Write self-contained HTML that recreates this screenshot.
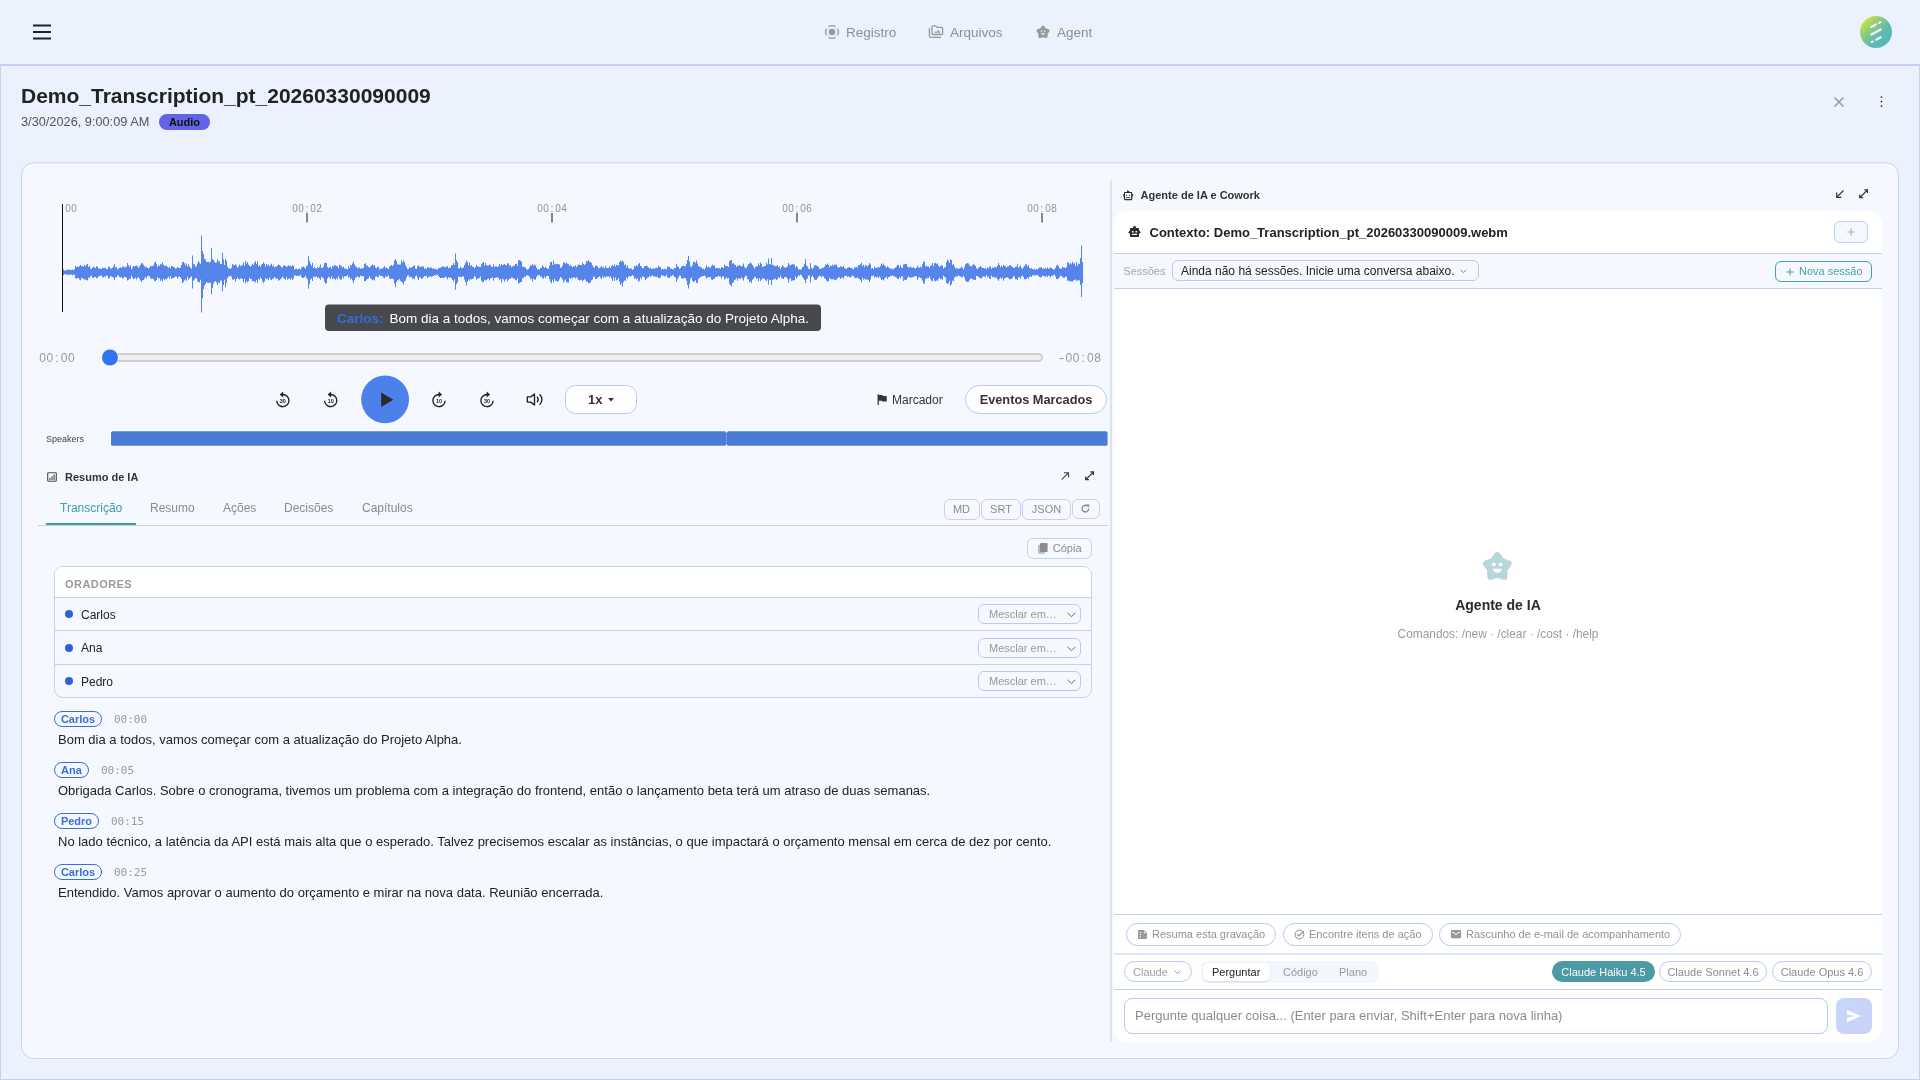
<!DOCTYPE html>
<html lang="pt">
<head>
<meta charset="utf-8">
<title>Demo_Transcription_pt_20260330090009</title>
<style>
*{box-sizing:border-box;margin:0;padding:0}
html,body{width:1920px;height:1080px;overflow:hidden}
body{background:#ebf1fd;font-family:"Liberation Sans",sans-serif;color:#222;position:relative;font-size:13px}
.abs{position:absolute}
.mono{font-family:"Liberation Mono",monospace}
.dmono{font-family:"DejaVu Sans Mono","Liberation Mono",monospace}
svg{display:block;overflow:visible}
.t{position:absolute;white-space:nowrap;line-height:1}
/* header */
#hdr{left:0;top:0;width:1920px;height:66px;border-bottom:2px solid #c3d1f1}
.nav{color:#8f8f8f;font-size:13.500px}
/* main frame */
#frame{left:0;top:65px;width:1920px;height:1015px;border:1px solid #c3d1f1;border-top:none;border-bottom-width:1px}
#card{left:21px;top:163px;width:1878px;height:896px;border:1px solid #c5d3f5;border-radius:13px;background:#f5f8ff}
.pill{position:absolute;border:1px solid #b9c9f3;background:#fff;border-radius:14px}
.btn{position:absolute;border:1px solid #c3d1f1;border-radius:6px;background:#f5f8ff;color:#8c8c8c;font-size:11px;text-align:center}
.hl{position:absolute;height:1px;background:#c3d1f1}
.fx span{display:inline-block;text-align:center}.fx10 span{width:6px}.fx12 span{width:7.2px}
</style>
</head>
<body>
<div id="root" style="position:absolute;left:0;top:0;width:1920px;height:1080px;will-change:transform">
<!-- HEADER -->
<div id="hdr" class="abs"></div>
<svg class="abs" style="left:33px;top:24px" width="18" height="16" viewBox="0 0 18 16"><path d="M0 1.500h18M0 8h18M0 14.500h18" stroke="#222" stroke-width="1.900" fill="none"/></svg>

<div class="t nav" style="left:846px;top:26px">Registro</div>
<div class="t nav" style="left:950px;top:26px">Arquivos</div>
<div class="t nav" style="left:1057px;top:26px">Agent</div>


<svg class="abs" style="left:824px;top:24px" width="16" height="16" viewBox="0 0 16 16"><path d="M4.66 2.66A6.3 6.3 0 0 1 11.34 2.66M13.34 4.66A6.3 6.3 0 0 1 13.34 11.34M11.34 13.34A6.3 6.3 0 0 1 4.66 13.34M2.66 11.34A6.3 6.3 0 0 1 2.66 4.66" fill="none" stroke="#999" stroke-width="1.3"/><circle cx="8" cy="8" r="3.3" fill="#999"/></svg>
<svg class="abs" style="left:928px;top:24px" width="16" height="15" viewBox="0 0 16 15"><g fill="none" stroke="#999" stroke-width="1.3"><path d="M1.4 4.2V12.300a1 1 0 0 0 1 1H13"/><path d="M5 1.800H7.600L9.200 3.400H13.600a1 1 0 0 1 1 1V9.500a1 1 0 0 1-1 1H5a1 1 0 0 1-1-1V2.800a1 1 0 0 1 1-1Z"/></g><path d="M6.200 8.700L7.800 7.200L8.600 8L10.400 6.100L12.400 8.700Z" fill="#999"/></svg>
<svg class="abs" style="left:1036px;top:24.800px" width="14" height="13.500" viewBox="0 0 33 32"><path d="M16.50 4.80L21.14 11.01L28.48 13.51L24.01 19.84L23.91 27.59L16.50 25.30L9.09 27.59L8.99 19.84L4.52 13.51L11.86 11.01Z" fill="#999" stroke="#999" stroke-width="7" stroke-linejoin="round"/><circle cx="12.800" cy="14.500" r="1.900" fill="#ebf1fd"/><circle cx="20.200" cy="14.500" r="1.900" fill="#ebf1fd"/><path d="M12 19.300h9a4.500 4 0 0 1-9 0z" fill="#ebf1fd"/></svg>

<!-- avatar -->
<div class="abs" style="left:1860px;top:16px;width:32px;height:32px;border-radius:50%;background:linear-gradient(135deg,#dbe830 10%,#8fcc7c 35%,#5fbab2 62%,#55b4c3 100%)"></div>
<svg class="abs" style="left:1860px;top:16px" width="32" height="32" viewBox="0 0 32 32"><g stroke="#eef3fb" stroke-width="2.200" stroke-linecap="round" fill="none" transform="translate(0.300 0.200)"><path d="M11 10.700L15.600 8.300M18.800 6.700L20.400 5.900"/><path d="M11 18.300L20.400 13.300"/><path d="M11.400 25.800L12.600 25.200M15.800 23.500L20.400 21"/></g></svg>

<!-- close + kebab -->
<svg class="abs" style="left:1834px;top:97px" width="10" height="10" viewBox="0 0 10 10"><path d="M0.500 0.500L9.500 9.500M9.500 0.500L0.500 9.500" stroke="#999" stroke-width="1.500"/></svg>
<svg class="abs" style="left:1879.800px;top:95.800px" width="3" height="12" viewBox="0 0 3 12"><circle cx="1.500" cy="1.100" r="0.900" fill="#333"/><circle cx="1.500" cy="5.600" r="0.900" fill="#333"/><circle cx="1.500" cy="10.200" r="0.900" fill="#333"/></svg>

<!-- FRAME -->
<div id="frame" class="abs"></div>
<div class="t" style="left:21px;top:85px;font-size:21px;font-weight:bold;color:#222">Demo_Transcription_pt_20260330090009</div>
<div class="t" style="left:21px;top:116px;font-size:12.750px;color:#555">3/30/2026, 9:00:09 AM</div>
<div class="abs" style="left:159px;top:114px;width:51.400px;height:16.300px;border-radius:8.200px;background:#6164e6"></div>
<div class="t" style="left:159.500px;top:117px;width:50px;text-align:center;font-size:11px;font-weight:bold;color:#111">Audio</div>

<svg class="abs" style="left:0;top:0" width="1920" height="1080" viewBox="0 0 1920 1080"><rect x="21.500" y="162.900" width="1877" height="895.600" rx="12" fill="#f5f8ff" stroke="#c5d3f5" stroke-width="1"/></svg>


<!-- ===== LEFT: PLAYER ===== -->
<svg class="abs" style="left:0;top:0" width="1120" height="340" viewBox="0 0 1120 340">
  
  <path d="M307 213v9.5M552 213v9.5M797 213v9.5M1042 213v9.5" stroke="#86868c" stroke-width="2"/>
  <path d="M62,272.3V270.4h1V269.5h1V270.4h1V270.4h1V270.2h1V269.7h1V269.6h1V269.7h1V269.9h1V270.1h1V269.4h1V270.2h1V269.3h1V266.0h1V266.9h1V266.7h1V266.9h1V265.9h1V265.1h1V265.9h1V266.2h1V266.6h1V265.1h1V266.3h1V264.8h1V263.9h1V267.1h1V265.7h1V268.7h1V268.8h1V267.5h1V266.7h1V267.6h1V268.3h1V266.3h1V266.6h1V268.5h1V268.5h1V268.8h1V269.0h1V267.8h1V268.0h1V268.1h1V267.8h1V269.2h1V269.0h1V266.6h1V266.9h1V268.4h1V268.4h1V267.8h1V266.5h1V264.3h1V267.6h1V267.1h1V269.4h1V268.5h1V267.9h1V267.3h1V268.1h1V266.8h1V266.2h1V267.8h1V266.8h1V266.7h1V263.1h1V265.2h1V266.8h1V265.3h1V269.2h1V267.8h1V266.1h1V266.3h1V265.9h1V265.4h1V266.3h1V268.0h1V266.4h1V265.0h1V263.2h1V263.3h1V264.8h1V265.9h1V267.4h1V266.4h1V268.0h1V268.3h1V267.6h1V266.0h1V266.3h1V266.0h1V265.6h1V262.8h1V261.6h1V264.3h1V266.9h1V265.3h1V266.1h1V264.0h1V264.5h1V262.2h1V264.8h1V265.7h1V265.9h1V265.4h1V267.1h1V268.0h1V266.6h1V268.2h1V265.9h1V265.9h1V266.9h1V267.6h1V268.6h1V268.2h1V266.7h1V267.7h1V268.0h1V267.8h1V264.9h1V262.1h1V261.9h1V263.2h1V265.2h1V263.6h1V266.5h1V264.2h1V266.5h1V267.6h1V268.7h1V255.4h1V263.9h1V264.5h1V266.4h1V266.3h1V263.6h1V261.1h1V262.8h1V263.8h1V235.6h1V251.1h1V254.1h1V258.7h1V259.5h1V261.9h1V261.7h1V261.7h1V262.4h1V261.7h1V247.8h1V259.0h1V260.2h1V261.4h1V263.0h1V262.4h1V259.5h1V261.2h1V261.5h1V263.9h1V264.0h1V253.1h1V259.4h1V265.0h1V258.7h1V260.8h1V266.6h1V268.4h1V268.3h1V269.1h1V267.7h1V263.9h1V265.2h1V265.2h1V264.3h1V265.4h1V267.8h1V266.6h1V264.7h1V266.2h1V265.6h1V265.1h1V262.6h1V265.7h1V261.1h1V263.5h1V261.9h1V264.8h1V265.7h1V266.6h1V265.8h1V263.8h1V265.0h1V262.7h1V260.9h1V263.9h1V261.3h1V266.3h1V265.0h1V266.9h1V264.8h1V264.0h1V262.3h1V263.8h1V266.6h1V264.0h1V265.6h1V264.4h1V266.5h1V264.9h1V263.7h1V266.6h1V265.1h1V267.2h1V266.8h1V266.5h1V265.4h1V264.6h1V264.9h1V266.0h1V267.2h1V267.4h1V265.8h1V265.2h1V266.1h1V266.7h1V266.3h1V265.3h1V266.0h1V265.4h1V266.8h1V265.1h1V266.0h1V269.4h1V268.9h1V268.5h1V269.5h1V268.9h1V268.6h1V269.8h1V267.4h1V266.9h1V266.5h1V267.4h1V268.5h1V266.2h1V265.2h1V256.2h1V260.7h1V263.8h1V265.8h1V262.8h1V268.0h1V266.9h1V268.2h1V268.5h1V267.3h1V268.0h1V266.7h1V264.5h1V267.9h1V267.9h1V266.2h1V263.1h1V262.7h1V262.9h1V267.0h1V268.2h1V267.1h1V266.9h1V268.4h1V265.9h1V266.4h1V265.1h1V265.6h1V266.1h1V266.2h1V268.1h1V264.7h1V265.2h1V266.2h1V267.4h1V266.5h1V268.5h1V268.6h1V268.9h1V269.5h1V266.3h1V267.9h1V265.0h1V265.4h1V263.4h1V261.5h1V264.3h1V266.6h1V266.7h1V268.5h1V267.8h1V267.6h1V268.7h1V268.5h1V268.2h1V268.1h1V264.0h1V263.3h1V265.8h1V265.6h1V267.1h1V267.4h1V266.6h1V265.5h1V264.4h1V265.6h1V264.9h1V267.5h1V268.2h1V266.8h1V266.7h1V269.5h1V268.7h1V268.6h1V268.5h1V267.4h1V266.0h1V267.9h1V267.5h1V268.4h1V269.1h1V266.5h1V265.7h1V265.1h1V266.1h1V264.7h1V260.6h1V259.2h1V260.9h1V264.6h1V264.3h1V264.8h1V264.4h1V260.5h1V262.6h1V260.5h1V261.9h1V265.2h1V267.1h1V268.9h1V269.1h1V267.1h1V268.1h1V267.2h1V266.9h1V266.0h1V265.3h1V268.5h1V268.9h1V266.3h1V265.1h1V266.7h1V267.0h1V266.5h1V266.5h1V266.5h1V268.9h1V268.1h1V269.1h1V267.2h1V267.5h1V268.1h1V267.5h1V267.5h1V268.8h1V268.3h1V269.1h1V268.7h1V269.5h1V269.5h1V268.3h1V268.1h1V267.4h1V267.2h1V266.2h1V266.4h1V267.1h1V267.2h1V266.7h1V266.0h1V268.3h1V267.7h1V267.6h1V265.2h1V264.9h1V263.1h1V265.1h1V253.5h1V260.3h1V261.9h1V268.2h1V268.5h1V266.7h1V268.0h1V268.3h1V267.4h1V265.1h1V263.0h1V260.5h1V262.0h1V265.3h1V262.5h1V265.9h1V265.1h1V266.8h1V267.0h1V268.2h1V267.1h1V265.1h1V266.3h1V266.7h1V266.8h1V266.9h1V264.5h1V263.0h1V262.1h1V265.5h1V263.0h1V265.3h1V265.4h1V265.4h1V264.4h1V265.0h1V266.7h1V267.0h1V264.2h1V266.7h1V266.5h1V266.6h1V267.1h1V266.5h1V264.2h1V266.1h1V263.8h1V265.3h1V264.8h1V264.0h1V264.9h1V265.6h1V263.0h1V263.8h1V265.7h1V265.0h1V267.3h1V266.2h1V266.2h1V265.5h1V264.0h1V263.7h1V265.7h1V260.6h1V260.0h1V260.7h1V261.8h1V266.8h1V266.7h1V267.3h1V267.5h1V269.0h1V269.7h1V268.9h1V267.2h1V265.3h1V265.4h1V263.9h1V265.7h1V264.5h1V265.3h1V267.7h1V269.3h1V269.3h1V269.5h1V268.1h1V267.7h1V265.3h1V266.8h1V268.1h1V266.7h1V268.1h1V268.5h1V268.8h1V265.8h1V262.1h1V261.8h1V264.9h1V260.5h1V264.5h1V263.8h1V264.3h1V263.8h1V264.2h1V264.6h1V267.7h1V267.4h1V265.7h1V262.7h1V262.6h1V263.8h1V262.5h1V263.7h1V264.1h1V265.9h1V264.8h1V266.2h1V267.0h1V266.1h1V266.6h1V265.2h1V267.3h1V266.1h1V264.4h1V264.8h1V264.9h1V265.2h1V262.5h1V264.1h1V265.0h1V264.0h1V261.1h1V261.4h1V260.1h1V261.7h1V262.1h1V263.0h1V265.2h1V267.1h1V267.7h1V265.5h1V265.8h1V266.3h1V268.2h1V267.9h1V267.2h1V265.8h1V267.7h1V266.9h1V268.5h1V266.0h1V267.9h1V268.0h1V268.1h1V266.4h1V267.9h1V266.1h1V265.1h1V266.1h1V264.2h1V266.5h1V264.7h1V265.2h1V265.6h1V262.2h1V260.8h1V261.4h1V260.4h1V261.8h1V265.1h1V264.3h1V267.6h1V265.3h1V268.1h1V268.7h1V268.5h1V268.6h1V270.0h1V269.1h1V265.8h1V266.8h1V265.1h1V266.2h1V264.0h1V263.0h1V266.0h1V266.4h1V268.3h1V268.1h1V266.1h1V265.9h1V265.5h1V266.6h1V267.6h1V268.5h1V267.7h1V268.9h1V268.5h1V268.6h1V268.4h1V267.9h1V267.8h1V267.9h1V265.7h1V266.7h1V267.6h1V269.6h1V269.0h1V269.3h1V268.8h1V268.7h1V269.4h1V266.6h1V266.7h1V266.9h1V268.7h1V268.6h1V269.3h1V269.5h1V267.9h1V267.9h1V263.7h1V266.2h1V267.1h1V269.0h1V268.3h1V266.5h1V265.7h1V265.7h1V266.2h1V266.3h1V263.7h1V260.0h1V255.9h1V261.6h1V266.6h1V266.8h1V265.3h1V261.8h1V262.1h1V262.9h1V260.6h1V263.4h1V266.3h1V266.5h1V266.9h1V267.5h1V269.1h1V268.6h1V269.5h1V267.8h1V265.6h1V267.6h1V266.5h1V267.5h1V267.5h1V266.1h1V264.8h1V265.8h1V265.6h1V268.2h1V267.8h1V268.0h1V268.4h1V268.1h1V268.7h1V267.0h1V267.4h1V268.0h1V264.6h1V266.0h1V266.1h1V266.2h1V266.9h1V261.0h1V260.3h1V260.1h1V263.8h1V263.1h1V264.5h1V265.0h1V267.1h1V265.5h1V266.0h1V265.1h1V265.7h1V266.4h1V265.7h1V263.6h1V266.9h1V268.2h1V267.9h1V266.1h1V263.9h1V263.4h1V262.6h1V263.4h1V265.0h1V266.6h1V268.5h1V267.0h1V266.2h1V266.3h1V263.3h1V265.4h1V262.4h1V263.9h1V266.9h1V266.4h1V266.0h1V265.8h1V262.7h1V264.6h1V258.6h1V264.1h1V264.6h1V257.9h1V264.8h1V265.5h1V265.6h1V266.3h1V265.8h1V264.9h1V267.1h1V266.2h1V268.9h1V266.9h1V265.0h1V266.6h1V267.2h1V268.0h1V266.9h1V266.5h1V263.0h1V264.7h1V265.6h1V264.5h1V264.2h1V264.2h1V264.6h1V267.4h1V266.1h1V267.2h1V269.4h1V269.2h1V269.8h1V269.2h1V267.0h1V266.5h1V263.8h1V259.2h1V265.6h1V266.6h1V268.8h1V269.2h1V263.0h1V267.7h1V268.9h1V267.4h1V265.3h1V265.2h1V265.6h1V266.1h1V266.9h1V269.1h1V268.9h1V268.2h1V268.3h1V267.6h1V266.7h1V264.6h1V265.1h1V263.5h1V264.8h1V267.3h1V265.4h1V265.9h1V264.5h1V266.1h1V264.5h1V264.7h1V264.7h1V267.0h1V267.5h1V267.2h1V266.3h1V266.5h1V266.9h1V265.7h1V268.1h1V268.4h1V268.9h1V267.7h1V267.5h1V267.0h1V268.0h1V268.1h1V268.7h1V269.2h1V266.9h1V267.5h1V267.1h1V267.5h1V265.1h1V265.0h1V264.3h1V262.7h1V266.1h1V264.8h1V266.9h1V264.8h1V265.6h1V266.4h1V265.1h1V263.1h1V264.6h1V268.6h1V268.1h1V269.2h1V266.7h1V267.7h1V267.9h1V267.6h1V267.0h1V267.6h1V266.2h1V263.4h1V265.0h1V263.5h1V265.4h1V266.5h1V267.7h1V266.3h1V267.3h1V268.1h1V268.8h1V268.6h1V269.5h1V268.8h1V268.2h1V267.4h1V266.6h1V264.9h1V265.0h1V267.5h1V265.4h1V267.5h1V268.1h1V264.5h1V264.3h1V263.9h1V263.8h1V266.4h1V267.2h1V267.5h1V266.6h1V267.5h1V267.9h1V267.0h1V267.9h1V268.6h1V267.7h1V265.7h1V267.3h1V267.8h1V266.5h1V267.4h1V264.2h1V261.7h1V261.5h1V266.2h1V265.8h1V266.4h1V266.4h1V267.8h1V266.1h1V265.2h1V262.7h1V266.2h1V263.2h1V262.8h1V264.1h1V263.2h1V265.8h1V267.0h1V265.8h1V265.4h1V265.6h1V268.6h1V267.6h1V267.1h1V262.2h1V259.5h1V260.8h1V263.0h1V259.3h1V260.2h1V265.1h1V263.9h1V266.5h1V268.6h1V268.1h1V268.4h1V268.7h1V268.6h1V268.1h1V266.6h1V267.9h1V269.4h1V266.8h1V264.3h1V263.3h1V263.2h1V263.6h1V265.5h1V265.9h1V266.4h1V265.6h1V264.3h1V264.7h1V266.0h1V268.3h1V269.3h1V267.4h1V267.3h1V266.0h1V267.2h1V267.9h1V268.1h1V268.8h1V268.0h1V269.3h1V267.6h1V268.2h1V266.4h1V266.4h1V268.7h1V267.4h1V268.0h1V267.2h1V266.9h1V267.4h1V265.7h1V262.9h1V264.9h1V267.2h1V265.6h1V267.1h1V265.1h1V265.7h1V266.3h1V267.5h1V266.3h1V266.3h1V265.4h1V264.9h1V266.6h1V266.8h1V268.1h1V267.7h1V266.7h1V266.6h1V263.7h1V267.7h1V266.5h1V265.4h1V268.1h1V268.7h1V267.2h1V266.0h1V264.6h1V264.3h1V266.4h1V265.2h1V268.0h1V268.7h1V268.1h1V269.0h1V269.6h1V268.8h1V269.7h1V269.0h1V269.6h1V268.4h1V267.6h1V267.5h1V267.2h1V268.9h1V268.2h1V268.7h1V267.9h1V268.8h1V267.6h1V268.8h1V268.2h1V267.3h1V268.1h1V269.0h1V269.4h1V269.6h1V267.7h1V265.6h1V264.8h1V265.9h1V268.2h1V268.8h1V268.8h1V266.8h1V267.4h1V267.5h1V267.9h1V267.2h1V262.6h1V262.4h1V264.6h1V263.1h1V264.2h1V261.8h1V263.5h1V263.3h1V265.9h1V262.1h1V265.6h1V263.6h1V263.9h1V258.3h1V245.4h1V262.0h1V272.3V283.1h-1V297.1h-1V284.7h-1V280.6h-1V280.3h-1V280.3h-1V281.1h-1V279.2h-1V280.0h-1V280.5h-1V281.6h-1V281.5h-1V281.2h-1V281.3h-1V280.5h-1V280.8h-1V276.7h-1V276.8h-1V277.7h-1V278.0h-1V276.8h-1V276.2h-1V275.6h-1V277.2h-1V278.6h-1V279.3h-1V279.1h-1V276.5h-1V274.7h-1V275.1h-1V275.9h-1V275.7h-1V277.5h-1V276.0h-1V275.5h-1V277.0h-1V275.7h-1V277.1h-1V276.2h-1V275.8h-1V275.7h-1V277.1h-1V277.5h-1V277.0h-1V276.1h-1V275.2h-1V275.0h-1V275.3h-1V275.8h-1V274.8h-1V275.6h-1V277.1h-1V276.0h-1V276.9h-1V278.8h-1V277.5h-1V278.7h-1V279.3h-1V279.2h-1V277.1h-1V275.6h-1V276.5h-1V278.8h-1V277.2h-1V277.2h-1V280.0h-1V279.3h-1V279.3h-1V276.8h-1V276.1h-1V278.2h-1V278.8h-1V279.3h-1V279.2h-1V278.0h-1V277.6h-1V277.3h-1V277.9h-1V278.4h-1V280.7h-1V277.5h-1V279.0h-1V277.6h-1V278.9h-1V280.7h-1V279.2h-1V277.4h-1V277.7h-1V277.2h-1V276.9h-1V277.1h-1V275.5h-1V278.9h-1V278.7h-1V276.6h-1V277.6h-1V275.1h-1V277.3h-1V276.4h-1V276.5h-1V276.8h-1V278.5h-1V278.7h-1V277.6h-1V277.1h-1V275.9h-1V276.0h-1V280.1h-1V279.8h-1V279.7h-1V279.3h-1V278.5h-1V278.8h-1V280.1h-1V281.7h-1V281.7h-1V281.9h-1V280.5h-1V277.2h-1V275.8h-1V277.2h-1V277.3h-1V276.6h-1V275.9h-1V275.5h-1V276.2h-1V276.7h-1V276.6h-1V277.7h-1V281.3h-1V280.5h-1V284.2h-1V285.7h-1V280.8h-1V283.6h-1V283.8h-1V282.9h-1V277.4h-1V276.7h-1V275.6h-1V279.8h-1V278.7h-1V279.3h-1V277.6h-1V279.1h-1V281.1h-1V280.3h-1V281.3h-1V280.7h-1V278.3h-1V281.4h-1V280.5h-1V278.9h-1V276.5h-1V277.9h-1V277.7h-1V278.8h-1V278.7h-1V283.6h-1V283.4h-1V280.6h-1V278.2h-1V277.9h-1V277.3h-1V277.8h-1V280.1h-1V276.3h-1V276.0h-1V276.4h-1V277.0h-1V277.1h-1V277.4h-1V277.5h-1V277.6h-1V276.6h-1V277.7h-1V279.8h-1V280.1h-1V279.7h-1V280.9h-1V276.6h-1V276.6h-1V278.3h-1V277.0h-1V279.2h-1V278.9h-1V277.4h-1V276.7h-1V276.6h-1V276.2h-1V275.3h-1V276.0h-1V275.9h-1V277.0h-1V277.1h-1V279.0h-1V276.8h-1V277.4h-1V279.1h-1V280.4h-1V279.3h-1V280.1h-1V277.7h-1V276.4h-1V278.1h-1V276.5h-1V277.5h-1V276.7h-1V277.5h-1V275.3h-1V275.9h-1V276.0h-1V279.4h-1V281.9h-1V279.9h-1V279.4h-1V279.4h-1V279.4h-1V278.7h-1V279.7h-1V277.8h-1V282.2h-1V280.1h-1V279.1h-1V278.5h-1V277.6h-1V277.9h-1V278.3h-1V277.6h-1V275.8h-1V275.7h-1V276.4h-1V277.1h-1V277.5h-1V276.3h-1V276.9h-1V275.6h-1V275.9h-1V276.3h-1V278.4h-1V277.6h-1V277.7h-1V279.0h-1V277.2h-1V277.2h-1V278.4h-1V279.5h-1V280.2h-1V280.0h-1V278.8h-1V279.5h-1V279.3h-1V279.2h-1V277.7h-1V280.9h-1V281.8h-1V280.5h-1V278.7h-1V278.3h-1V276.6h-1V276.3h-1V277.2h-1V276.1h-1V275.8h-1V276.7h-1V278.2h-1V279.8h-1V279.9h-1V279.5h-1V277.2h-1V275.6h-1V277.1h-1V282.5h-1V275.6h-1V275.5h-1V278.3h-1V279.4h-1V283.0h-1V280.1h-1V278.4h-1V276.9h-1V275.0h-1V274.8h-1V275.8h-1V275.2h-1V277.3h-1V278.6h-1V276.6h-1V280.0h-1V280.5h-1V280.5h-1V280.9h-1V278.1h-1V279.3h-1V282.7h-1V278.7h-1V277.2h-1V277.3h-1V277.2h-1V279.0h-1V278.8h-1V277.8h-1V275.8h-1V277.9h-1V277.3h-1V279.2h-1V279.9h-1V278.4h-1V279.4h-1V279.0h-1V280.0h-1V285.1h-1V280.0h-1V279.7h-1V284.5h-1V279.2h-1V281.3h-1V280.0h-1V278.7h-1V278.7h-1V278.3h-1V279.8h-1V280.9h-1V278.2h-1V281.2h-1V278.1h-1V278.9h-1V277.2h-1V276.7h-1V278.8h-1V279.8h-1V282.9h-1V281.5h-1V282.3h-1V279.5h-1V279.0h-1V275.8h-1V275.9h-1V277.5h-1V280.5h-1V278.6h-1V277.6h-1V278.7h-1V278.7h-1V278.2h-1V280.7h-1V277.9h-1V279.4h-1V280.0h-1V282.2h-1V282.9h-1V286.4h-1V285.0h-1V283.8h-1V278.1h-1V278.4h-1V277.5h-1V278.4h-1V279.5h-1V276.6h-1V276.6h-1V278.5h-1V276.5h-1V276.4h-1V276.1h-1V276.8h-1V277.1h-1V277.1h-1V278.7h-1V279.1h-1V279.9h-1V279.4h-1V277.0h-1V277.3h-1V277.2h-1V277.6h-1V278.4h-1V276.6h-1V275.6h-1V276.0h-1V276.0h-1V276.8h-1V276.9h-1V278.0h-1V278.9h-1V282.8h-1V282.9h-1V280.2h-1V281.2h-1V282.1h-1V280.7h-1V277.6h-1V278.8h-1V283.7h-1V288.4h-1V284.9h-1V280.7h-1V277.9h-1V278.0h-1V278.3h-1V278.7h-1V278.2h-1V275.8h-1V275.6h-1V277.3h-1V279.2h-1V281.7h-1V277.3h-1V277.1h-1V275.2h-1V275.3h-1V276.3h-1V276.3h-1V278.0h-1V278.1h-1V277.2h-1V274.7h-1V276.3h-1V276.4h-1V275.6h-1V275.7h-1V274.9h-1V277.6h-1V278.2h-1V277.9h-1V276.4h-1V277.1h-1V276.7h-1V276.4h-1V276.3h-1V275.6h-1V275.8h-1V277.0h-1V276.1h-1V277.5h-1V277.8h-1V278.8h-1V279.9h-1V277.5h-1V276.7h-1V276.6h-1V279.2h-1V277.6h-1V280.7h-1V281.5h-1V278.3h-1V279.6h-1V278.1h-1V279.0h-1V275.9h-1V275.0h-1V275.9h-1V276.7h-1V275.9h-1V276.5h-1V278.8h-1V277.3h-1V281.0h-1V280.3h-1V281.9h-1V286.4h-1V283.5h-1V284.7h-1V281.5h-1V278.2h-1V279.8h-1V280.2h-1V277.5h-1V280.9h-1V277.3h-1V280.8h-1V278.4h-1V276.2h-1V277.5h-1V276.3h-1V276.4h-1V276.6h-1V277.6h-1V276.5h-1V278.1h-1V276.3h-1V279.2h-1V277.8h-1V276.3h-1V277.0h-1V278.1h-1V279.1h-1V279.0h-1V276.7h-1V276.8h-1V279.6h-1V280.2h-1V282.2h-1V283.3h-1V283.0h-1V281.6h-1V282.0h-1V279.8h-1V279.3h-1V280.3h-1V281.2h-1V279.8h-1V280.1h-1V280.6h-1V280.1h-1V278.2h-1V277.3h-1V278.5h-1V277.4h-1V277.6h-1V278.6h-1V277.5h-1V278.9h-1V278.0h-1V282.5h-1V282.2h-1V282.6h-1V279.4h-1V280.7h-1V282.8h-1V279.4h-1V277.7h-1V276.9h-1V279.3h-1V281.0h-1V282.0h-1V280.7h-1V280.7h-1V278.8h-1V282.3h-1V279.8h-1V283.3h-1V281.7h-1V279.1h-1V276.0h-1V275.8h-1V276.2h-1V278.4h-1V276.6h-1V278.6h-1V278.2h-1V276.5h-1V276.7h-1V275.1h-1V275.2h-1V275.2h-1V277.2h-1V279.8h-1V279.4h-1V278.6h-1V281.5h-1V278.8h-1V278.8h-1V276.7h-1V275.8h-1V275.2h-1V275.4h-1V277.1h-1V276.3h-1V278.1h-1V278.1h-1V281.9h-1V282.2h-1V282.8h-1V283.8h-1V278.2h-1V280.2h-1V280.0h-1V279.0h-1V278.3h-1V277.7h-1V277.4h-1V278.7h-1V278.5h-1V279.7h-1V281.6h-1V278.9h-1V279.6h-1V281.7h-1V279.5h-1V278.7h-1V282.6h-1V279.0h-1V279.8h-1V277.7h-1V277.6h-1V277.4h-1V277.8h-1V278.0h-1V280.8h-1V277.3h-1V278.0h-1V278.6h-1V280.2h-1V278.4h-1V278.9h-1V279.9h-1V280.4h-1V279.7h-1V282.1h-1V282.2h-1V280.8h-1V276.6h-1V277.8h-1V278.6h-1V278.8h-1V279.7h-1V277.0h-1V275.8h-1V278.2h-1V278.9h-1V279.5h-1V278.9h-1V280.5h-1V279.4h-1V281.4h-1V285.5h-1V282.3h-1V279.6h-1V276.8h-1V276.0h-1V277.3h-1V277.1h-1V276.7h-1V276.6h-1V282.5h-1V283.9h-1V289.7h-1V279.3h-1V281.4h-1V280.0h-1V278.2h-1V277.3h-1V277.9h-1V276.9h-1V279.3h-1V277.6h-1V276.4h-1V277.7h-1V277.9h-1V277.8h-1V278.0h-1V278.0h-1V277.1h-1V276.0h-1V275.1h-1V274.6h-1V275.6h-1V274.9h-1V276.1h-1V276.3h-1V276.8h-1V276.5h-1V276.5h-1V277.0h-1V277.9h-1V275.7h-1V276.2h-1V276.1h-1V277.2h-1V278.6h-1V278.9h-1V277.2h-1V277.2h-1V280.2h-1V277.7h-1V275.5h-1V276.3h-1V279.3h-1V278.2h-1V278.8h-1V277.2h-1V276.8h-1V277.2h-1V275.2h-1V275.4h-1V277.8h-1V280.4h-1V281.4h-1V284.6h-1V282.6h-1V281.8h-1V280.7h-1V278.9h-1V280.5h-1V280.1h-1V282.0h-1V287.2h-1V283.6h-1V279.5h-1V278.7h-1V278.8h-1V278.9h-1V278.4h-1V275.5h-1V276.5h-1V276.7h-1V276.4h-1V278.2h-1V277.8h-1V275.9h-1V276.1h-1V275.9h-1V274.8h-1V276.9h-1V277.3h-1V276.3h-1V276.7h-1V280.4h-1V279.4h-1V280.2h-1V279.3h-1V278.1h-1V276.2h-1V278.5h-1V278.9h-1V279.7h-1V281.0h-1V281.2h-1V276.3h-1V276.1h-1V276.4h-1V275.4h-1V277.6h-1V277.3h-1V276.3h-1V277.4h-1V277.4h-1V280.0h-1V283.1h-1V280.5h-1V278.5h-1V279.6h-1V276.7h-1V277.8h-1V274.9h-1V275.9h-1V276.2h-1V276.3h-1V278.3h-1V276.5h-1V279.4h-1V279.4h-1V278.5h-1V276.3h-1V279.4h-1V278.3h-1V279.7h-1V278.8h-1V278.3h-1V279.2h-1V276.2h-1V279.0h-1V277.6h-1V276.7h-1V278.5h-1V283.2h-1V283.7h-1V281.8h-1V278.2h-1V277.7h-1V276.7h-1V279.7h-1V278.4h-1V277.2h-1V278.1h-1V275.9h-1V277.2h-1V277.1h-1V276.4h-1V281.1h-1V278.5h-1V279.6h-1V284.2h-1V288.7h-1V279.3h-1V278.1h-1V275.8h-1V277.3h-1V277.9h-1V277.9h-1V276.9h-1V274.8h-1V275.7h-1V276.1h-1V275.4h-1V276.0h-1V275.2h-1V275.6h-1V278.5h-1V279.9h-1V278.0h-1V279.5h-1V278.5h-1V278.9h-1V279.5h-1V277.1h-1V279.6h-1V279.0h-1V277.7h-1V276.8h-1V278.3h-1V279.3h-1V280.0h-1V280.7h-1V278.5h-1V279.0h-1V277.8h-1V277.1h-1V278.7h-1V278.8h-1V280.0h-1V279.2h-1V277.6h-1V279.9h-1V278.5h-1V279.2h-1V278.2h-1V281.6h-1V283.1h-1V281.3h-1V278.8h-1V277.2h-1V279.7h-1V279.0h-1V283.1h-1V279.9h-1V282.3h-1V281.4h-1V281.2h-1V281.3h-1V279.0h-1V279.0h-1V277.8h-1V281.3h-1V282.6h-1V281.1h-1V283.4h-1V278.9h-1V282.4h-1V279.1h-1V278.5h-1V278.4h-1V279.4h-1V279.1h-1V277.4h-1V279.2h-1V281.4h-1V278.7h-1V279.7h-1V279.5h-1V276.7h-1V275.7h-1V276.2h-1V276.5h-1V278.0h-1V282.9h-1V287.2h-1V279.7h-1V285.1h-1V290.9h-1V280.7h-1V280.4h-1V283.3h-1V282.5h-1V285.0h-1V282.4h-1V280.9h-1V281.7h-1V283.4h-1V287.9h-1V294.3h-1V282.8h-1V282.9h-1V282.7h-1V282.7h-1V281.9h-1V283.9h-1V285.5h-1V289.2h-1V298.3h-1V312.6h-1V279.8h-1V282.2h-1V282.2h-1V281.0h-1V277.9h-1V278.2h-1V279.6h-1V280.7h-1V288.6h-1V276.5h-1V277.4h-1V278.2h-1V279.6h-1V277.1h-1V280.8h-1V279.3h-1V280.3h-1V282.0h-1V283.3h-1V279.0h-1V277.2h-1V276.6h-1V277.1h-1V278.7h-1V276.5h-1V276.4h-1V277.1h-1V278.1h-1V278.2h-1V278.7h-1V275.9h-1V278.7h-1V276.8h-1V278.1h-1V279.2h-1V279.0h-1V280.1h-1V278.8h-1V281.3h-1V279.6h-1V281.0h-1V278.0h-1V278.7h-1V277.3h-1V280.0h-1V281.2h-1V280.8h-1V279.0h-1V278.7h-1V278.8h-1V278.2h-1V276.2h-1V275.7h-1V276.2h-1V278.4h-1V276.9h-1V278.6h-1V280.3h-1V279.9h-1V282.0h-1V280.4h-1V278.9h-1V277.0h-1V278.0h-1V279.6h-1V277.7h-1V278.4h-1V279.2h-1V277.5h-1V275.6h-1V279.0h-1V278.6h-1V280.0h-1V280.6h-1V277.8h-1V277.1h-1V276.7h-1V278.3h-1V278.6h-1V277.1h-1V277.4h-1V277.1h-1V275.5h-1V275.3h-1V277.4h-1V277.3h-1V280.1h-1V277.8h-1V277.0h-1V276.4h-1V275.9h-1V278.0h-1V278.4h-1V275.9h-1V275.3h-1V276.8h-1V276.5h-1V277.6h-1V276.9h-1V275.4h-1V275.7h-1V276.1h-1V276.6h-1V277.9h-1V278.3h-1V276.9h-1V277.1h-1V278.1h-1V277.7h-1V275.8h-1V276.3h-1V278.1h-1V277.6h-1V280.5h-1V280.1h-1V279.4h-1V279.6h-1V278.7h-1V278.2h-1V278.0h-1V280.2h-1V279.6h-1V278.1h-1V278.0h-1V278.4h-1V278.2h-1V274.9h-1V274.6h-1V275.3h-1V274.6h-1V274.6h-1V274.7h-1V274.8h-1V274.8h-1V274.6h-1V274.2h-1V274.3h-1V275.2h-1V273.9h-1Z" fill="#5585ea"/>
  <rect x="62" y="204" width="1" height="108" fill="#111"/>
</svg>

<div class="t fx fx10" style="left:65px;top:204px;font-size:10px;color:#929298"><span>0</span><span>0</span></div>
<div class="t fx fx10" style="left:292px;top:204px;font-size:10px;color:#929298"><span>0</span><span>0</span><span>:</span><span>0</span><span>2</span></div>
<div class="t fx fx10" style="left:537px;top:204px;font-size:10px;color:#929298"><span>0</span><span>0</span><span>:</span><span>0</span><span>4</span></div>
<div class="t fx fx10" style="left:782px;top:204px;font-size:10px;color:#929298"><span>0</span><span>0</span><span>:</span><span>0</span><span>6</span></div>
<div class="t fx fx10" style="left:1027px;top:204px;font-size:10px;color:#929298"><span>0</span><span>0</span><span>:</span><span>0</span><span>8</span></div>
<svg class="abs" style="left:320px;top:300px" width="510" height="36" viewBox="320 300 510 36"><rect x="325" y="304.600" width="496" height="26.500" rx="4" fill="#48494d"/></svg>
<div class="t" style="left:337px;top:312px;font-size:13.500px;color:#fff"><b style="color:#2f6edb;margin-right:6px">Carlos:</b>Bom dia a todos, vamos começar com a atualização do Projeto Alpha.</div>

<div class="t fx fx12" style="left:39px;top:352px;font-size:12px;color:#999"><span>0</span><span>0</span><span>:</span><span>0</span><span>0</span></div>
<div class="abs" style="left:102px;top:353px;width:941px;height:9px;border-radius:4.500px;background:#efefef;border:2px solid #cfcfcf"></div>
<svg class="abs" style="left:100px;top:347px" width="20" height="21" viewBox="0 0 20 21"><circle cx="10" cy="10.500" r="8.600" fill="#f5f8ff" opacity="0.700"/><circle cx="10" cy="10.500" r="8" fill="#3273f0"/></svg>
<div class="t fx fx12" style="left:1058px;top:352px;font-size:12px;color:#999"><span style="transform:scaleX(1.500)">-</span><span>0</span><span>0</span><span>:</span><span>0</span><span>8</span></div>

<!-- controls -->
<svg class="abs" style="left:355px;top:370px" width="60" height="60" viewBox="355 370 60 60"><circle cx="385.100" cy="399.400" r="23.900" fill="#4c80ea"/><path d="M381.200 392.400L393.300 399.700L381.200 407Z" fill="#2a2a2a"/></svg>

<div class="pill" style="left:565px;top:385px;width:72px;height:29px;border-radius:10.500px"></div>
<div class="t" style="left:588px;top:393px;font-size:13px;font-weight:bold;color:#333">1x</div>
<svg class="abs" style="left:608px;top:398px" width="6" height="4" viewBox="0 0 6 4"><path d="M0 0h6L3 3.6Z" fill="#333"/></svg>

<svg class="abs" style="left:876.500px;top:394px" width="10.200" height="11.100" viewBox="0 0 11 12"><path d="M0.6 0.3h1.3v0.9h4l0.3 1h4.3v6H5.6l-0.3-1H1.9v4.8H0.6Z" fill="#333"/></svg>
<div class="t" style="left:892px;top:394px;font-size:12px;color:#333">Marcador</div>
<div class="pill" style="left:965px;top:385px;width:142.400px;height:29px;border-radius:14.500px"></div>
<div class="t" style="left:965px;top:394px;width:142px;text-align:center;font-size:12.750px;font-weight:bold;color:#333">Eventos Marcados</div>

<svg class="abs" style="left:0;top:0" width="1120" height="440" viewBox="0 0 1120 440"><g transform="translate(282.8 400.6)" fill="none" stroke="#222" stroke-width="1.350"><path d="M0.00 -6.10A6.1 6.1 0 1 1 -6.10 0.21"/><path d="M0.400 -9L-3.100 -6.100L0.400 -3.200Z" fill="#222" stroke="none"/></g><text x="282.8" y="402.70000000000005" text-anchor="middle" font-family="Liberation Sans, sans-serif" font-weight="bold" font-size="5.500" fill="#222">30</text><g transform="translate(330.7 400.6)" fill="none" stroke="#222" stroke-width="1.350"><path d="M0.00 -6.10A6.1 6.1 0 1 1 -6.10 0.21"/><path d="M0.400 -9L-3.100 -6.100L0.400 -3.200Z" fill="#222" stroke="none"/></g><text x="330.7" y="402.70000000000005" text-anchor="middle" font-family="Liberation Sans, sans-serif" font-weight="bold" font-size="5.500" fill="#222">10</text><g transform="translate(439 400.6) scale(-1 1)" fill="none" stroke="#222" stroke-width="1.350"><path d="M0.00 -6.10A6.1 6.1 0 1 1 -6.10 0.21"/><path d="M0.400 -9L-3.100 -6.100L0.400 -3.200Z" fill="#222" stroke="none"/></g><text x="439" y="402.70000000000005" text-anchor="middle" font-family="Liberation Sans, sans-serif" font-weight="bold" font-size="5.500" fill="#222">10</text><g transform="translate(487 400.6) scale(-1 1)" fill="none" stroke="#222" stroke-width="1.350"><path d="M0.00 -6.10A6.1 6.1 0 1 1 -6.10 0.21"/><path d="M0.400 -9L-3.100 -6.100L0.400 -3.200Z" fill="#222" stroke="none"/></g><text x="487" y="402.70000000000005" text-anchor="middle" font-family="Liberation Sans, sans-serif" font-weight="bold" font-size="5.500" fill="#222">30</text><g fill="none" stroke="#222" stroke-width="1.350" stroke-linejoin="round"><path d="M527.300 396.900H530.800L534.500 394V405L530.800 402.100H527.300Z"/><path d="M537.300 397.300a3.400 3.400 0 0 1 0 4.400" stroke-linecap="round"/><path d="M540 394.700a7 7 0 0 1 0 9.600" stroke-linecap="round"/></g></svg>
<!-- speakers bar -->
<div class="t" style="left:46px;top:435px;font-size:9px;color:#444">Speakers</div>
<svg class="abs" style="left:100px;top:425px" width="1020" height="26" viewBox="100 425 1020 26"><rect x="110.200" y="430.300" width="998.200" height="16.400" rx="2" fill="#fff" opacity="0.900"/><rect x="725" y="432.700" width="3" height="11.600" fill="#7f9fe0"/><rect x="111" y="431.300" width="615.100" height="14.400" rx="1.500" fill="#4b7bd6"/><rect x="726.900" y="431.300" width="380.700" height="14.400" rx="1.500" fill="#4b7bd6"/></svg>


<!-- ===== LEFT: RESUMO DE IA ===== -->
<svg class="abs" style="left:47.300px;top:472.200px" width="10" height="10" viewBox="0 0 10 10"><rect x="0.700" y="0.700" width="8.600" height="8.500" rx="0.900" fill="#fff" stroke="#4d4d4d" stroke-width="1.150"/><path d="M2.900 7.800V6.200M5 7.800V4.500M7.100 7.800V2.900" stroke="#333" stroke-width="1" stroke-linecap="round"/></svg>
<div class="t" style="left:65px;top:472px;font-size:11px;font-weight:bold;color:#333">Resumo de IA</div>
<svg class="abs" style="left:1061px;top:472px" width="8.300" height="8.300" viewBox="0 0 9 9"><path d="M0.700 8.300L8 1M3.200 0.800H8.200V5.800" fill="none" stroke="#3c3c3c" stroke-width="1.150"/></svg>
<svg class="abs" style="left:1085px;top:471.200px" width="9.200" height="9.600" viewBox="0 0 10 10"><path d="M1 9L9 1M5.800 0.800H9.200V4.200M0.800 5.800V9.200H4.200" fill="none" stroke="#333" stroke-width="1.250"/></svg>

<div class="t" style="left:60px;top:502px;font-size:12px;color:#3f9ba5">Transcrição</div>
<div class="t" style="left:150px;top:502px;font-size:12px;color:#8c8c8c">Resumo</div>
<div class="t" style="left:223px;top:502px;font-size:12px;color:#8c8c8c">Ações</div>
<div class="t" style="left:284px;top:502px;font-size:12px;color:#8c8c8c">Decisões</div>
<div class="t" style="left:362px;top:502px;font-size:12px;color:#8c8c8c">Capítulos</div>
<div class="hl" style="left:38px;top:525px;width:1070px"></div>
<div class="abs" style="left:46px;top:523px;width:90px;height:2px;background:#3f9ba5"></div>

<div class="btn" style="left:943.500px;top:499px;width:36px;height:20.500px;line-height:18px">MD</div>
<div class="btn" style="left:981px;top:499px;width:40px;height:20.500px;line-height:18px">SRT</div>
<div class="btn" style="left:1022px;top:499px;width:49px;height:20.500px;line-height:18px">JSON</div>
<div class="btn" style="left:1072px;top:499px;width:27.500px;height:19.700px"></div>
<svg class="abs" style="left:1081px;top:504px" width="9" height="9" viewBox="0 0 9 9"><path d="M7.700 4.600A3.300 3.300 0 1 1 6.500 2" fill="none" stroke="#858585" stroke-width="1.300"/><path d="M5 0.400H8.200V3.600Z" fill="#858585"/></svg>

<div class="btn" style="left:1027px;top:538px;width:65px;height:20.500px"></div>
<svg class="abs" style="left:1038px;top:543px" width="10" height="11" viewBox="0 0 10 11"><rect x="0" y="1.8" width="7" height="9" rx="1" fill="#bdbdbd"/><rect x="2" y="0" width="7.6" height="9" rx="1" fill="#8c8c8c"/></svg>
<div class="t" style="left:1052.800px;top:543px;font-size:11px;color:#8c8c8c">Cópia</div>

<!-- oradores box -->
<div class="abs" style="left:54px;top:566px;width:1038px;height:132px;border:1px solid #c3d1f1;border-radius:9px;background:#f5f8ff;overflow:hidden">
  <div style="height:31px;background:#fff;border-bottom:1px solid #c3d1f1"></div>
  <div style="height:33px;border-bottom:1px solid #c3d1f1"></div>
  <div style="height:33.5px;border-bottom:1px solid #c3d1f1"></div>
</div>
<div class="t" style="left:65px;top:579px;font-size:11px;font-weight:bold;color:#999;letter-spacing:0.450px">ORADORES</div>
<div class="abs" style="left:65px;top:610px;width:8px;height:8px;border-radius:50%;background:#2b62d9"></div>
<div class="t" style="left:81px;top:609px;font-size:12px;color:#222">Carlos</div>
<div class="btn" style="left:978px;top:604px;width:103px;height:20px;border-color:#b9c9f3"></div>
<div class="t" style="left:989px;top:609px;font-size:11px;color:#999">Mesclar em…</div>
<svg class="abs" style="left:1067px;top:611.5px" width="9" height="6" viewBox="0 0 9 6"><path d="M0.600 0.800L4.500 4.700L8.400 0.800" fill="none" stroke="#6a6a6a" stroke-width="1"/></svg>
<div class="abs" style="left:65px;top:644px;width:8px;height:8px;border-radius:50%;background:#2b62d9"></div>
<div class="t" style="left:81px;top:642px;font-size:12px;color:#222">Ana</div>
<div class="btn" style="left:978px;top:638px;width:103px;height:20px;border-color:#b9c9f3"></div>
<div class="t" style="left:989px;top:643px;font-size:11px;color:#999">Mesclar em…</div>
<svg class="abs" style="left:1067px;top:645.5px" width="9" height="6" viewBox="0 0 9 6"><path d="M0.600 0.800L4.500 4.700L8.400 0.800" fill="none" stroke="#6a6a6a" stroke-width="1"/></svg>
<div class="abs" style="left:65px;top:677px;width:8px;height:8px;border-radius:50%;background:#2b62d9"></div>
<div class="t" style="left:81px;top:676px;font-size:12px;color:#222">Pedro</div>
<div class="btn" style="left:978px;top:671px;width:103px;height:20px;border-color:#b9c9f3"></div>
<div class="t" style="left:989px;top:676px;font-size:11px;color:#999">Mesclar em…</div>
<svg class="abs" style="left:1067px;top:678.5px" width="9" height="6" viewBox="0 0 9 6"><path d="M0.600 0.800L4.500 4.700L8.400 0.800" fill="none" stroke="#6a6a6a" stroke-width="1"/></svg>

<!-- transcript -->
<div class="abs" style="left:54px;top:710.8px;width:48px;height:16px;border:1px solid #3a6fd8;border-radius:8px"></div>
<div class="t" style="left:54px;top:714px;width:48px;text-align:center;font-size:11px;font-weight:bold;color:#3a6fd8">Carlos</div>
<div class="t dmono" style="left:114px;top:714px;font-size:11px;color:#9a9a9a">00:00</div>
<div class="t" style="left:58px;top:733px;font-size:13px;color:#222">Bom dia a todos, vamos começar com a atualização do Projeto Alpha.</div>
<div class="abs" style="left:54px;top:761.8px;width:35px;height:16px;border:1px solid #3a6fd8;border-radius:8px"></div>
<div class="t" style="left:54px;top:765px;width:35px;text-align:center;font-size:11px;font-weight:bold;color:#3a6fd8">Ana</div>
<div class="t dmono" style="left:101px;top:765px;font-size:11px;color:#9a9a9a">00:05</div>
<div class="t" style="left:58px;top:784px;font-size:13px;color:#222">Obrigada Carlos. Sobre o cronograma, tivemos um problema com a integração do frontend, então o lançamento beta terá um atraso de duas semanas.</div>
<div class="abs" style="left:54px;top:812.8px;width:45px;height:16px;border:1px solid #3a6fd8;border-radius:8px"></div>
<div class="t" style="left:54px;top:816px;width:45px;text-align:center;font-size:11px;font-weight:bold;color:#3a6fd8">Pedro</div>
<div class="t dmono" style="left:111px;top:816px;font-size:11px;color:#9a9a9a">00:15</div>
<div class="t" style="left:58px;top:835px;font-size:13px;color:#222">No lado técnico, a latência da API está mais alta que o esperado. Talvez precisemos escalar as instâncias, o que impactará o orçamento mensal em cerca de dez por cento.</div>
<div class="abs" style="left:54px;top:863.8px;width:48px;height:16px;border:1px solid #3a6fd8;border-radius:8px"></div>
<div class="t" style="left:54px;top:867px;width:48px;text-align:center;font-size:11px;font-weight:bold;color:#3a6fd8">Carlos</div>
<div class="t dmono" style="left:114px;top:867px;font-size:11px;color:#9a9a9a">00:25</div>
<div class="t" style="left:58px;top:886px;font-size:13px;color:#222">Entendido. Vamos aprovar o aumento do orçamento e mirar na nova data. Reunião encerrada.</div>

<!-- divider -->
<div class="abs" style="left:1109.500px;top:180px;width:2px;height:862px;background:#e0e2ea;border-radius:1px"></div>


<!-- ===== RIGHT: AGENT ===== -->
<svg class="abs" style="left:1122px;top:189px" width="12" height="12" viewBox="0 0 12 12"><path d="M2.300 4.500Q-0.300 6.300 2.300 8.100ZM9.900 4.500Q12.500 6.300 9.900 8.100ZM4.900 3.200L5.300 1L8.300 3.200Z" fill="#2e2e2e"/><rect x="2.500" y="3.500" width="7.200" height="7.100" rx="0.600" fill="#fff" stroke="#2e2e2e" stroke-width="1.150"/><circle cx="4.500" cy="6.300" r="0.650" fill="#2e2e2e"/><circle cx="7.600" cy="6.300" r="0.650" fill="#2e2e2e"/><path d="M4.100 8.600H8" stroke="#2e2e2e" stroke-width="0.900" stroke-linecap="round"/></svg>
<div class="t" style="left:1140.600px;top:190px;font-size:11px;font-weight:bold;color:#333">Agente de IA e Cowork</div>
<svg class="abs" style="left:1836px;top:190px" width="8" height="8" viewBox="0 0 8 8"><path d="M7.5 0.5L0.8 7.2M0.7 2.6V7.3H5.4" fill="none" stroke="#333" stroke-width="1.2"/></svg>
<svg class="abs" style="left:1859px;top:189.200px" width="9.200" height="9.600" viewBox="0 0 10 10"><path d="M1 9L9 1M5.800 0.800H9.200V4.200M0.800 5.800V9.200H4.200" fill="none" stroke="#333" stroke-width="1.250"/></svg>

<div class="abs" style="left:1114px;top:211px;width:768px;height:831px;border-radius:13px;background:#fff;overflow:hidden">
  <div class="abs" style="left:0;top:42px;width:768px;height:36px;background:#f5f8ff;border-top:1px solid #c3d1f1;border-bottom:1px solid #c3d1f1"></div>
  <div class="hl" style="left:0;top:703px;width:768px"></div>
  <div class="hl" style="left:0;top:742px;width:768px;height:2px;background:#dde5f8"></div>
  <div class="hl" style="left:0;top:778px;width:768px"></div>
</div>
<!-- context row -->
<svg class="abs" style="left:1128px;top:226px" width="13" height="11" viewBox="0 0 13 11"><path d="M2.200 4L0.100 6.400L2.200 7.800ZM10.800 4L12.900 6.400L10.800 7.800Z" fill="#2b2b2b"/><rect x="2" y="2.100" width="9" height="8.800" rx="0.900" fill="#2b2b2b"/><circle cx="6.500" cy="1.500" r="1.400" fill="#2b2b2b"/><rect x="3.900" y="4.900" width="1.700" height="1.500" rx="0.300" fill="#fff"/><rect x="7.500" y="4.900" width="1.700" height="1.500" rx="0.300" fill="#fff"/><rect x="4" y="7.800" width="5.100" height="1.200" rx="0.300" fill="#fff"/></svg>
<div class="t" style="left:1149.500px;top:226px;font-size:13px;font-weight:bold;color:#222">Contexto: Demo_Transcription_pt_20260330090009.webm</div>
<div class="btn" style="left:1834.300px;top:221px;width:33.400px;height:21.500px"></div>
<svg class="abs" style="left:1847px;top:228px" width="8" height="8" viewBox="0 0 8 8"><path d="M4 0.300V7.700M0.300 4H7.700" stroke="#b0b0b0" stroke-width="1.1"/></svg>

<!-- sessions row -->
<div class="t" style="left:1123.300px;top:266px;font-size:11px;color:#a8a8a8">Sessões</div>
<div class="btn" style="left:1171.700px;top:260px;width:307px;height:21.400px;border-color:#b9c9f3"></div>
<div class="t" style="left:1181px;top:265px;font-size:12px;color:#222">Ainda não há sessões. Inicie uma conversa abaixo.</div>
<svg class="abs" style="left:1460px;top:269px" width="7" height="5" viewBox="0 0 7 5"><path d="M0.700 0.800L3.500 3.600L6.300 0.800" fill="none" stroke="#888" stroke-width="1"/></svg>
<div class="btn" style="left:1774.500px;top:260.700px;width:97.500px;height:21px;border-color:#4a9fa8;border-width:1.300px"></div>
<svg class="abs" style="left:1786px;top:267.500px" width="8" height="8" viewBox="0 0 8 8"><path d="M4 0.300V7.700M0.300 4H7.700" stroke="#4a9fa8" stroke-width="1"/></svg>
<div class="t" style="left:1799px;top:266px;font-size:11px;color:#4a9fa8">Nova sessão</div>

<!-- empty state -->
<svg class="abs" style="left:1482.300px;top:550.800px" width="30.600" height="29.700" viewBox="0 0 33 32"><path d="M16.50 4.80L21.14 11.01L28.48 13.51L24.01 19.84L23.91 27.59L16.50 25.30L9.09 27.59L8.99 19.84L4.52 13.51L11.86 11.01Z" fill="#b7d7dd" stroke="#b7d7dd" stroke-width="7" stroke-linejoin="round"/><circle cx="12.800" cy="14.500" r="2" fill="#fff"/><circle cx="20.200" cy="14.500" r="2" fill="#fff"/><path d="M11.700 19h9.600a4.800 4.300 0 0 1-9.600 0z" fill="#fff"/></svg>
<div class="t" style="left:1114px;top:598px;width:768px;text-align:center;font-size:14px;font-weight:bold;color:#2a2a2a">Agente de IA</div>
<div class="t" style="left:1114px;top:629px;width:768px;text-align:center;font-size:11.900px;color:#9a9a9a">Comandos: /new · /clear · /cost · /help</div>

<!-- chips -->
<div class="pill" style="left:1125.800px;top:923px;width:150.400px;height:23px;border-radius:11.500px"></div>
<svg class="abs" style="left:1138px;top:930px" width="9" height="9" viewBox="0 0 9 9"><path d="M1.200 0H6L9 3V7.800A1.200 1.200 0 0 1 7.800 9H1.200A1.200 1.200 0 0 1 0 7.800V1.200A1.200 1.200 0 0 1 1.200 0Z" fill="#999"/><path d="M5.800 1.100V3.200H7.900Z" fill="#fff"/><rect x="1.800" y="2" width="1.200" height="1.100" fill="#fff"/><rect x="1.800" y="4.100" width="1.200" height="1.100" fill="#fff"/><rect x="1.800" y="6.200" width="1.200" height="1.100" fill="#fff"/></svg>
<div class="t" style="left:1152px;top:929px;font-size:11px;color:#929292">Resuma esta gravação</div>
<div class="pill" style="left:1282.800px;top:923px;width:150.400px;height:23px;border-radius:11.500px"></div>
<svg class="abs" style="left:1294px;top:929px" width="11" height="11" viewBox="0 0 11 11"><circle cx="5.400" cy="5.500" r="4.400" fill="none" stroke="#919191" stroke-width="1"/><path d="M3.300 5.300L4.700 6.900L9.800 2.100" fill="none" stroke="#919191" stroke-width="1.100"/></svg>
<div class="t" style="left:1309px;top:929px;font-size:11px;color:#929292">Encontre itens de ação</div>
<div class="pill" style="left:1438.800px;top:923px;width:242.400px;height:23px;border-radius:11.500px"></div>
<svg class="abs" style="left:1451px;top:930px" width="10" height="8" viewBox="0 0 10 8"><rect width="10" height="8.300" rx="0.800" fill="#999"/><path d="M1 1.700L5 4.500L9 1.700" fill="none" stroke="#fff" stroke-width="1"/></svg>
<div class="t" style="left:1466px;top:929px;font-size:11px;color:#929292">Rascunho de e-mail de acompanhamento</div>

<!-- mode row -->
<div class="pill" style="left:1123.600px;top:961px;width:68.700px;height:21px;border-radius:10.500px"></div>
<div class="t" style="left:1133px;top:967px;font-size:11px;color:#a0a0a0">Claude</div>
<svg class="abs" style="left:1174px;top:969.500px" width="7" height="5" viewBox="0 0 7 5"><path d="M0.700 0.800L3.500 3.600L6.300 0.800" fill="none" stroke="#999" stroke-width="1"/></svg>
<div class="abs" style="left:1201px;top:960.800px;width:178px;height:22px;border-radius:7px;background:#f3f6fe"></div>
<div class="abs" style="left:1202.500px;top:962.700px;width:67.700px;height:18.300px;border-radius:5px;background:#fff;box-shadow:0 1px 2px rgba(0,0,0,0.12)"></div>
<div class="t" style="left:1212px;top:967px;font-size:11px;color:#222">Perguntar</div>
<div class="t" style="left:1283px;top:967px;font-size:11px;color:#9a9a9a">Código</div>
<div class="t" style="left:1339px;top:967px;font-size:11px;color:#9a9a9a">Plano</div>

<div class="abs" style="left:1552px;top:961px;width:103px;height:21px;border-radius:10.500px;background:#4b9aa4"></div>
<div class="t" style="left:1552px;top:967px;width:103px;text-align:center;font-size:11px;color:#fff">Claude Haiku 4.5</div>
<div class="pill" style="left:1659px;top:961px;width:108px;height:21px;border-radius:10.500px"></div>
<div class="t" style="left:1659px;top:967px;width:108px;text-align:center;font-size:11px;color:#8c8c8c">Claude Sonnet 4.6</div>
<div class="pill" style="left:1772px;top:961px;width:100px;height:21px;border-radius:10.500px"></div>
<div class="t" style="left:1772px;top:967px;width:100px;text-align:center;font-size:11px;color:#8c8c8c">Claude Opus 4.6</div>

<!-- input -->
<div class="pill" style="left:1124px;top:998px;width:704px;height:36px;border-radius:8px"></div>
<div class="t" style="left:1135px;top:1009px;font-size:13px;color:#8c8c8c">Pergunte qualquer coisa... (Enter para enviar, Shift+Enter para nova linha)</div>
<div class="abs" style="left:1836px;top:998px;width:36px;height:36px;border-radius:8px;background:linear-gradient(135deg,#c4d8f9,#ccd0f6)"></div>
<svg class="abs" style="left:1847px;top:1009.900px" width="14.200" height="12.200" viewBox="0 0 15 13"><path d="M0 0L15 6.500L0 13V8L9 6.500L0 5Z" fill="#fff"/></svg>

</div>
</body>
</html>
